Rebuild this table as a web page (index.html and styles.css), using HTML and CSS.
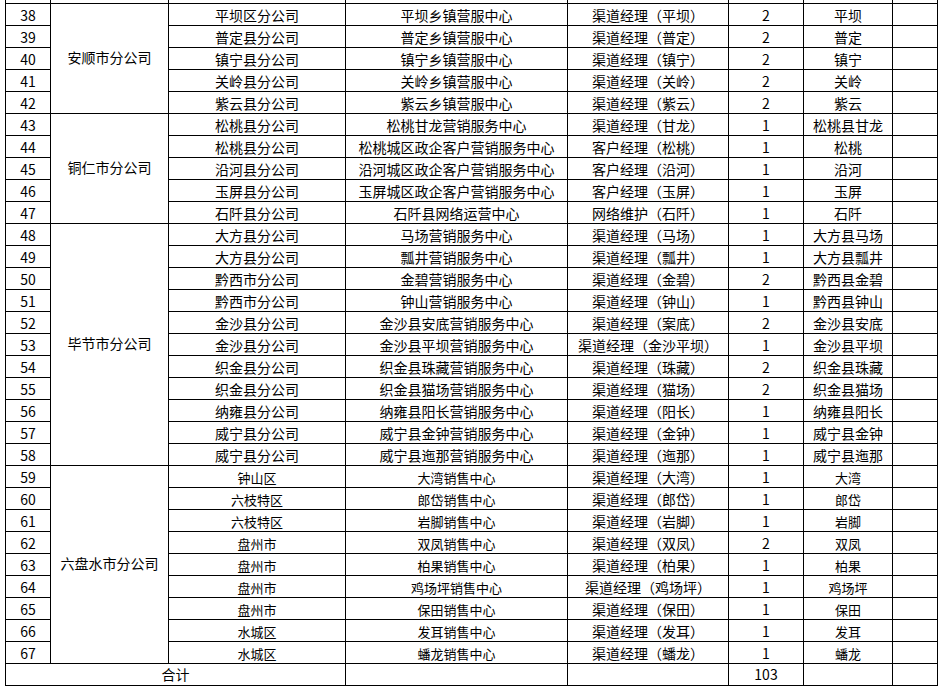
FILE: index.html
```html
<!DOCTYPE html>
<html lang="zh">
<head>
<meta charset="utf-8">
<link rel="stylesheet" href="styles.css">
</head>
<body>
<table class="sheet">
<colgroup>
<col class="c-no"><col class="c-co"><col class="c-br"><col class="c-ct"><col class="c-pos"><col class="c-n"><col class="c-loc"><col class="c-x">
</colgroup>
<tbody>
<tr><td></td><td></td><td></td><td></td><td></td><td></td><td></td><td></td></tr>
<tr><td>38</td><td rowspan="5" class="merge">安顺市分公司</td><td>平坝区分公司</td><td>平坝乡镇营服中心</td><td>渠道经理（平坝）</td><td>2</td><td>平坝</td><td></td></tr>
<tr><td>39</td><td>普定县分公司</td><td>普定乡镇营服中心</td><td>渠道经理（普定）</td><td>2</td><td>普定</td><td></td></tr>
<tr><td>40</td><td>镇宁县分公司</td><td>镇宁乡镇营服中心</td><td>渠道经理（镇宁）</td><td>2</td><td>镇宁</td><td></td></tr>
<tr><td>41</td><td>关岭县分公司</td><td>关岭乡镇营服中心</td><td>渠道经理（关岭）</td><td>2</td><td>关岭</td><td></td></tr>
<tr><td>42</td><td>紫云县分公司</td><td>紫云乡镇营服中心</td><td>渠道经理（紫云）</td><td>2</td><td>紫云</td><td></td></tr>
<tr><td>43</td><td rowspan="5" class="merge">铜仁市分公司</td><td>松桃县分公司</td><td>松桃甘龙营销服务中心</td><td>渠道经理（甘龙）</td><td>1</td><td>松桃县甘龙</td><td></td></tr>
<tr><td>44</td><td>松桃县分公司</td><td>松桃城区政企客户营销服务中心</td><td>客户经理（松桃）</td><td>1</td><td>松桃</td><td></td></tr>
<tr><td>45</td><td>沿河县分公司</td><td>沿河城区政企客户营销服务中心</td><td>客户经理（沿河）</td><td>1</td><td>沿河</td><td></td></tr>
<tr><td>46</td><td>玉屏县分公司</td><td>玉屏城区政企客户营销服务中心</td><td>客户经理（玉屏）</td><td>1</td><td>玉屏</td><td></td></tr>
<tr><td>47</td><td>石阡县分公司</td><td>石阡县网络运营中心</td><td>网络维护（石阡）</td><td>1</td><td>石阡</td><td></td></tr>
<tr><td>48</td><td rowspan="11" class="merge">毕节市分公司</td><td>大方县分公司</td><td>马场营销服务中心</td><td>渠道经理（马场）</td><td>1</td><td>大方县马场</td><td></td></tr>
<tr><td>49</td><td>大方县分公司</td><td>瓢井营销服务中心</td><td>渠道经理（瓢井）</td><td>1</td><td>大方县瓢井</td><td></td></tr>
<tr><td>50</td><td>黔西市分公司</td><td>金碧营销服务中心</td><td>渠道经理（金碧）</td><td>2</td><td>黔西县金碧</td><td></td></tr>
<tr><td>51</td><td>黔西市分公司</td><td>钟山营销服务中心</td><td>渠道经理（钟山）</td><td>1</td><td>黔西县钟山</td><td></td></tr>
<tr><td>52</td><td>金沙县分公司</td><td>金沙县安底营销服务中心</td><td>渠道经理（案底）</td><td>2</td><td>金沙县安底</td><td></td></tr>
<tr><td>53</td><td>金沙县分公司</td><td>金沙县平坝营销服务中心</td><td>渠道经理（金沙平坝）</td><td>1</td><td>金沙县平坝</td><td></td></tr>
<tr><td>54</td><td>织金县分公司</td><td>织金县珠藏营销服务中心</td><td>渠道经理（珠藏）</td><td>2</td><td>织金县珠藏</td><td></td></tr>
<tr><td>55</td><td>织金县分公司</td><td>织金县猫场营销服务中心</td><td>渠道经理（猫场）</td><td>2</td><td>织金县猫场</td><td></td></tr>
<tr><td>56</td><td>纳雍县分公司</td><td>纳雍县阳长营销服务中心</td><td>渠道经理（阳长）</td><td>1</td><td>纳雍县阳长</td><td></td></tr>
<tr><td>57</td><td>威宁县分公司</td><td>威宁县金钟营销服务中心</td><td>渠道经理（金钟）</td><td>1</td><td>威宁县金钟</td><td></td></tr>
<tr><td>58</td><td>威宁县分公司</td><td>威宁县迤那营销服务中心</td><td>渠道经理（迤那）</td><td>1</td><td>威宁县迤那</td><td></td></tr>
<tr><td>59</td><td rowspan="9" class="merge">六盘水市分公司</td><td class="sm">钟山区</td><td class="sm">大湾销售中心</td><td>渠道经理（大湾）</td><td>1</td><td class="sm">大湾</td><td></td></tr>
<tr><td>60</td><td class="sm">六枝特区</td><td class="sm">郎岱销售中心</td><td>渠道经理（郎岱）</td><td>1</td><td class="sm">郎岱</td><td></td></tr>
<tr><td>61</td><td class="sm">六枝特区</td><td class="sm">岩脚销售中心</td><td>渠道经理（岩脚）</td><td>1</td><td class="sm">岩脚</td><td></td></tr>
<tr><td>62</td><td class="sm">盘州市</td><td class="sm">双凤销售中心</td><td>渠道经理（双凤）</td><td>2</td><td class="sm">双凤</td><td></td></tr>
<tr><td>63</td><td class="sm">盘州市</td><td class="sm">柏果销售中心</td><td>渠道经理（柏果）</td><td>1</td><td class="sm">柏果</td><td></td></tr>
<tr><td>64</td><td class="sm">盘州市</td><td class="sm">鸡场坪销售中心</td><td>渠道经理（鸡场坪）</td><td>1</td><td class="sm">鸡场坪</td><td></td></tr>
<tr><td>65</td><td class="sm">盘州市</td><td class="sm">保田销售中心</td><td>渠道经理（保田）</td><td>1</td><td class="sm">保田</td><td></td></tr>
<tr><td>66</td><td class="sm">水城区</td><td class="sm">发耳销售中心</td><td>渠道经理（发耳）</td><td>1</td><td class="sm">发耳</td><td></td></tr>
<tr><td>67</td><td class="sm">水城区</td><td class="sm">蟠龙销售中心</td><td>渠道经理（蟠龙）</td><td>1</td><td class="sm">蟠龙</td><td></td></tr>
<tr class="total"><td colspan="3">合计</td><td></td><td></td><td>103</td><td></td><td></td></tr>
</tbody>
</table>
</body>
</html>
```
FILE: styles.css
```css
html, body {
  margin: 0;
  padding: 0;
  background: #fff;
}
body {
  overflow: hidden;
  height: 691px;
}
.sheet {
  border-collapse: collapse;
  table-layout: fixed;
  width: 932px;
  margin: -19px 0 0 5px;
  font-family: "Noto Sans CJK SC", "Noto Sans", sans-serif;
  font-size: 14px;
  font-weight: 400;
  color: #000;
}
.c-no { width: 45px; }
.c-co { width: 118px; }
.c-br { width: 177px; }
.c-ct { width: 222px; }
.c-pos { width: 161px; }
.c-n { width: 75px; }
.c-loc { width: 89px; }
.c-x { width: 45px; }
.sheet tr {
  height: 22px;
}
.sheet td {
  border: 1px solid #000;
  padding: 2px 0 0 0;
  text-align: center;
  vertical-align: middle;
  line-height: 17px;
  white-space: nowrap;
  overflow: hidden;
}
.sheet td.merge {
  padding: 0 0 2px 0;
}
.sheet td.sm {
  font-size: 13px;
}
.sheet .total td {
  padding: 0;
}
```
